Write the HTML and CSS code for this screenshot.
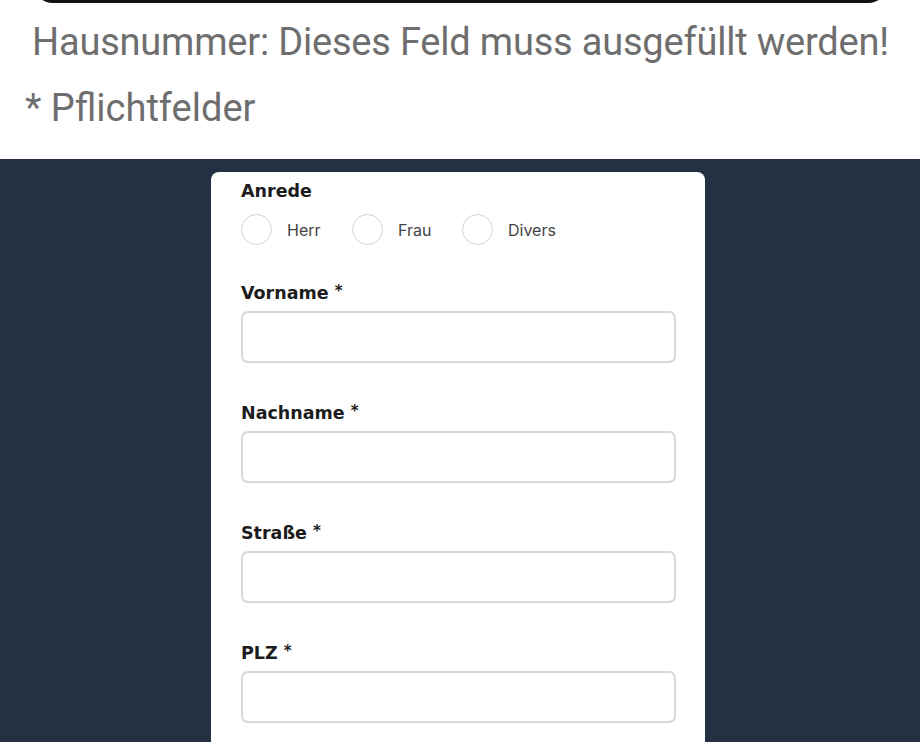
FILE: index.html
```html
<!DOCTYPE html>
<html lang="de">
<head>
<meta charset="utf-8">
<link rel="stylesheet" href="styles.css">
</head>
<body>
<section class="top">
  <div class="prev-input"></div>
  <p class="error">Hausnummer: Dieses Feld muss ausgefüllt werden!</p>
  <p class="required">* Pflichtfelder</p>
</section>
<section class="dark">
  <form class="card">
    <div class="label">Anrede</div>
    <div class="radios">
      <label class="radio"><span class="circle"></span><span>Herr</span></label>
      <label class="radio"><span class="circle"></span><span>Frau</span></label>
      <label class="radio"><span class="circle"></span><span>Divers</span></label>
    </div>
    <div class="field">
      <div class="label">Vorname <span class="ast">*</span></div>
      <div class="input"></div>
    </div>
    <div class="field">
      <div class="label">Nachname <span class="ast">*</span></div>
      <div class="input"></div>
    </div>
    <div class="field">
      <div class="label">Straße <span class="ast">*</span></div>
      <div class="input"></div>
    </div>
    <div class="field">
      <div class="label">PLZ <span class="ast">*</span></div>
      <div class="input"></div>
    </div>
  </form>
</section>
</body>
</html>
```
FILE: styles.css
```css
html, body {
  margin: 0;
  padding: 0;
  background: #ffffff;
  height: 742px;
  overflow: hidden;
}
.top {
  display: flow-root;
  height: 159px;
  font-family: Roboto, "Liberation Sans", sans-serif;
  color: #6e6e6e;
}
.prev-input {
  margin: -20px 32px 0 33px;
  height: 20px;
  border: 3px solid #111;
  border-top: none;
  border-radius: 0 0 20px 20px;
}
.error {
  margin: 19px 0 0 32px;
  font-size: 38px;
  line-height: 40px;
  letter-spacing: -0.2px;
}
.required {
  margin: 26px 0 0 25px;
  font-size: 38px;
  line-height: 40px;
}
.dark {
  background: #243142;
  height: 583px;
  padding-top: 13px;
  box-sizing: border-box;
  display: flex;
  justify-content: center;
}
.card {
  width: 494px;
  margin-left: -4px;
  background: #fff;
  border-radius: 8px 8px 0 0;
  padding: 9px 29px 0 30px;
  box-sizing: border-box;
  font-family: "DejaVu Sans", Inter, sans-serif;
  color: #1c1c1c;
}
.label {
  height: 20px;
  font-size: 17.5px;
  font-weight: 700;
  line-height: 20px;
  letter-spacing: 0;
}
.ast {
  font-size: 15px;
  line-height: 10px;
  vertical-align: 3px;
}
.radios {
  display: flex;
  margin-top: 13px;
  height: 31px;
}
.radio {
  display: flex;
  align-items: center;
  gap: 15px;
  font-family: Inter, "Liberation Sans", sans-serif;
  font-size: 16px;
  color: #444;
}
.radio:nth-child(1) { width: 111px; }
.radio:nth-child(2) { width: 110px; }
.circle {
  width: 31px;
  height: 31px;
  border: 1.5px solid #d2d2d2;
  border-radius: 50%;
  box-sizing: border-box;
}
.field {
  margin-top: 38px;
}
.field + .field {
  margin-top: 40px;
}
.input {
  margin-top: 8px;
  height: 52px;
  border: 2px solid #d8d8d8;
  border-radius: 7px;
  box-sizing: border-box;
}
```
